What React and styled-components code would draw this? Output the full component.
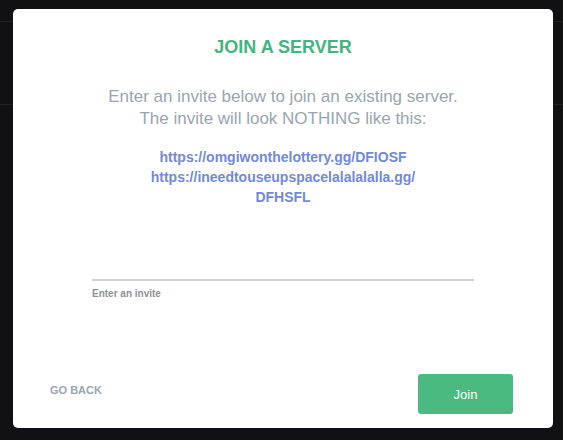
import styled, { createGlobalStyle } from 'styled-components'

const Global = createGlobalStyle`
    html, body {
        margin: 0;
        padding: 0;
        background: #111113;
        font-family: "Liberation Sans", Arial, sans-serif;
    }
`
const Backdrop = styled.div`
    position: relative;
    width: 563px;
    height: 440px;
    overflow: hidden;
    background: #111113;
`
const BgLine = styled.div`
    height: 1px;
    background: #202124;
    margin-top: ${p => p.top}px;
`
const Modal = styled.div`
    position: absolute;
    top: 9px;
    left: 13px;
    width: 540px;
    height: 419px;
    box-sizing: border-box;
    background: #fff;
    border-radius: 5px;
    padding: 27px 0 14px;
    display: flex;
    flex-direction: column;
    align-items: center;
`
const Title = styled.h2`
    margin: 0;
    font-size: 18px;
    line-height: 22px;
    font-weight: bold;
    color: #43b581;
`
const Lead = styled.p`
    margin: 28px 0 0;
    font-size: 17px;
    line-height: 22px;
    color: #99a5b0;
    text-align: center;
`
const Links = styled.div`
    margin-top: 17px;
    width: 290px;
    text-align: center;
    font-size: 14px;
    line-height: 20px;
    font-weight: bold;
    color: #7289da;
`
const Field = styled.div`
    margin-top: auto;
    width: 382px;
    margin-bottom: 75px;
`
const Input = styled.input`
    display: block;
    width: 100%;
    box-sizing: border-box;
    border: none;
    border-bottom: 2px solid #d0d0d0;
    outline: none;
    height: 30px;
    font-size: 14px;
    font-family: inherit;
    background: transparent;
`
const Label = styled.label`
    display: block;
    margin-top: 7px;
    font-size: 10px;
    font-weight: bold;
    color: #8e9297;
`
const Footer = styled.div`
    width: 100%;
    box-sizing: border-box;
    padding: 0 40px 0 37px;
    display: flex;
    justify-content: space-between;
    align-items: center;
`
const Back = styled.button`
    border: none;
    background: none;
    padding: 0;
    font-family: inherit;
    font-size: 11px;
    font-weight: bold;
    color: #99a5b0;
    margin-top: -8px;
`
const Join = styled.button`
    width: 95px;
    height: 40px;
    border: none;
    border-radius: 3px;
    background: #4aba81;
    color: #fff;
    font-family: inherit;
    font-size: 13px;
`

const App = () => {
    return (
        <Backdrop>
            <Global />
            <BgLine top={21} />
            <BgLine top={82} />
            <Modal>
                <Title>JOIN A SERVER</Title>
                <Lead>
                    Enter an invite below to join an existing server.<br />
                    The invite will look NOTHING like this:
                </Lead>
                <Links>
                    <div>https://omgiwonthelottery.gg/DFIOSF</div>
                    <div>https://ineedtouseupspacelalalalalla.gg/<wbr />DFHSFL</div>
                </Links>
                <Field>
                    <Input />
                    <Label>Enter an invite</Label>
                </Field>
                <Footer>
                    <Back>GO BACK</Back>
                    <Join>Join</Join>
                </Footer>
            </Modal>
        </Backdrop>
    )
}

export default App
